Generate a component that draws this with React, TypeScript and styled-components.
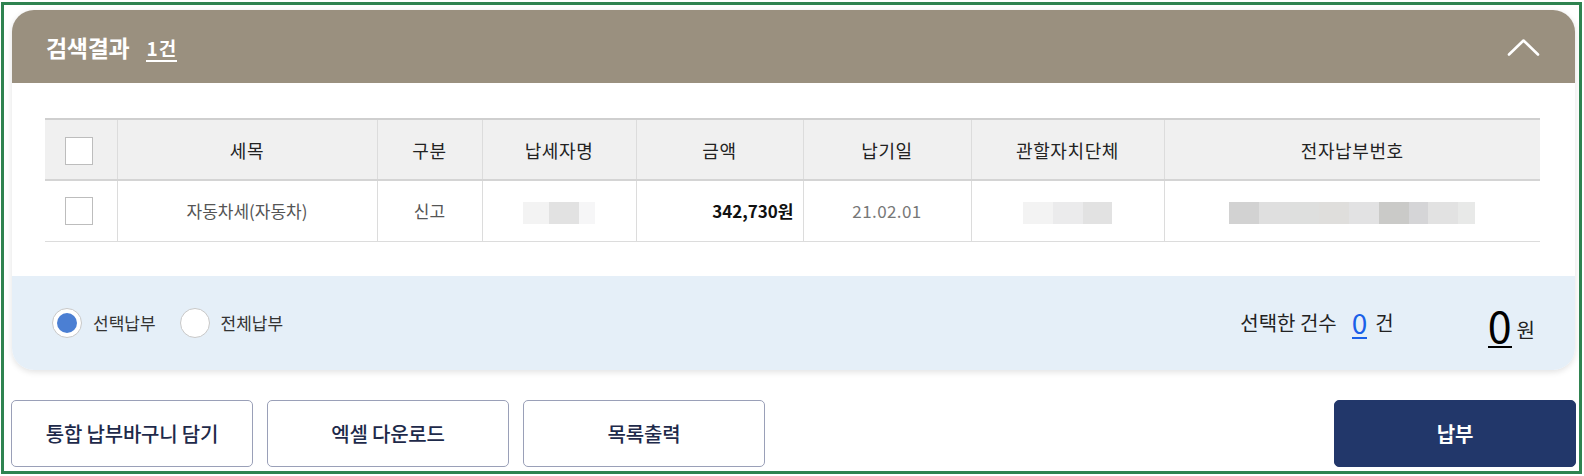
import React from 'react';
import styled, { createGlobalStyle } from 'styled-components';

const GlobalStyle = createGlobalStyle`
  html, body { margin: 0; padding: 0; background: #fff; }
  body { font-family: "Noto Sans CJK KR", "Noto Sans", sans-serif; }
  * { box-sizing: border-box; }
`;

const Frame = styled.div`
  margin: 2px 2px 2px 1px;
  height: 472px;
  border: 3px solid #2f8350;
  padding: 5px 4px 0 8px;
  display: flex;
  flex-direction: column;
`;

const Card = styled.section`
  border-radius: 22px;
  background: #fff;
  box-shadow: 0 2px 6px rgba(0, 0, 0, 0.12);
  overflow: hidden;
`;

const CardHeader = styled.header`
  height: 73px;
  background: #9a907f;
  display: flex;
  align-items: center;
  padding: 0 35px 0 34px;
`;

const Title = styled.h2`
  margin: 0;
  font-size: 23px;
  font-weight: 700;
  color: #fff;
  letter-spacing: -0.3px;
`;

const Count = styled.span`
  margin-left: 17px;
  font-size: 19px;
  font-weight: 700;
  color: #fff;
  border-bottom: 2px solid #fff;
  line-height: 24px;
  margin-top: 5px;
  letter-spacing: 1px;
`;

const Toggle = styled.button`
  margin-left: auto;
  background: none;
  border: 0;
  padding: 0;
  width: 33px;
  height: 20px;
  display: flex;
  align-items: center;
  justify-content: center;
`;

const CardBody = styled.div`
  padding: 35px 35px 34px 33px;
`;

const Table = styled.table`
  width: 100%;
  border-collapse: collapse;
  table-layout: fixed;
  border-top: 2px solid #cfcfcf;
`;

const Th = styled.th<{ $w?: number }>`
  width: ${p => (p.$w ? `${p.$w}px` : 'auto')};
  height: 61px;
  background: #f0f0f0;
  font-size: 18px;
  font-weight: 400;
  color: #222;
  text-align: center;
  letter-spacing: 0.6px;
  border-left: 1px solid #dcdcdc;
  border-bottom: 2px solid #d4d4d4;
  &:first-child { border-left: 0; padding-right: 4px; }
`;

const Td = styled.td<{ $align?: string; $bold?: boolean; $light?: boolean }>`
  height: 61px;
  font-size: 17px;
  color: ${p => (p.$bold ? '#111' : p.$light ? '#777' : '#555')};
  font-weight: ${p => (p.$bold ? 700 : 400)};
  text-align: ${p => p.$align || 'center'};
  padding: 0 ${p => (p.$align === 'right' ? '9px' : '0')} 0 0;
  border-left: 1px solid #dcdcdc;
  border-bottom: 1px solid #dcdcdc;
  letter-spacing: ${p => (p.$light ? '0.4px' : '0')};
  &:first-child { border-left: 0; padding-right: 4px; }
`;

const Check = styled.span`
  display: inline-block;
  width: 28px;
  height: 28px;
  border: 1px solid #bdbdbd;
  background: #fff;
  vertical-align: middle;
`;

const Blur = styled.div`
  display: inline-flex;
  height: 22px;
  vertical-align: middle;
`;

const BlurCell = styled.span<{ $c: string; $w: number }>`
  width: ${p => p.$w}px;
  height: 100%;
  background: ${p => p.$c};
`;

const Summary = styled.div`
  height: 94px;
  background: #e5eff8;
  display: flex;
  align-items: center;
  padding: 0 40px 0 40px;
`;

const RadioGroup = styled.div`
  display: flex;
  align-items: center;
  gap: 24px;
`;

const RadioItem = styled.label`
  display: flex;
  align-items: center;
  gap: 11px;
  font-size: 17px;
  color: #333;
`;

const RadioCircle = styled.span<{ $on?: boolean }>`
  width: 30px;
  height: 30px;
  border-radius: 50%;
  border: 1px solid #c8c8c8;
  background: #fff;
  display: flex;
  align-items: center;
  justify-content: center;
  &::after {
    content: '';
    width: 20px;
    height: 20px;
    border-radius: 50%;
    background: ${p => (p.$on ? '#4b7fd3' : 'transparent')};
  }
`;

const Totals = styled.div`
  margin-left: auto;
  display: flex;
  align-items: center;
`;

const TotalLabel = styled.span`
  font-size: 20px;
  color: #222;
`;

const CountNum = styled.span`
  margin: 0 8px 0 15px;
  font-size: 28px;
  line-height: 30px;
  color: #1a60e8;
  border-bottom: 2px solid #1a60e8;
`;

const Amount = styled.span`
  margin-left: 94px;
  font-size: 43px;
  line-height: 44px;
  color: #000;
  border-bottom: 2px solid #000;
  margin-top: 4px;
`;

const Unit = styled.span`
  margin-left: 5px;
  font-size: 20px;
  color: #222;
  margin-top: 14px;
`;

const Actions = styled.div`
  margin-top: 30px;
  margin-left: -1px;
  display: flex;
  gap: 14px;
`;

const ActionButton = styled.button<{ $primary?: boolean }>`
  width: 242px;
  height: 67px;
  border-radius: 5px;
  border: 1px solid ${p => (p.$primary ? '#22376a' : '#9aa0b8')};
  background: ${p => (p.$primary ? '#22376a' : '#fff')};
  color: ${p => (p.$primary ? '#fff' : '#1e2a4a')};
  font-family: "Noto Sans CJK KR", sans-serif;
  font-size: 20px;
  font-weight: ${p => (p.$primary ? 700 : 500)};
  letter-spacing: -0.2px;
  margin-left: ${p => (p.$primary ? 'auto' : '0')};
  margin-right: ${p => (p.$primary ? '-1px' : '0')};
`;

const nameBlur = [
  { c: '#f3f3f3', w: 26 },
  { c: '#e2e2e2', w: 30 },
  { c: '#f6f6f7', w: 16 },
];
const orgBlur = [
  { c: '#f3f3f3', w: 30 },
  { c: '#ebebec', w: 30 },
  { c: '#e2e2e2', w: 29 },
];
const numBlur = [
  { c: '#d2d2d2', w: 30 },
  { c: '#dfdfdf', w: 31 },
  { c: '#dedfde', w: 29 },
  { c: '#dfdedc', w: 30 },
  { c: '#e2e2e3', w: 30 },
  { c: '#cacac8', w: 30 },
  { c: '#d5d5d7', w: 19 },
  { c: '#e2e2e2', w: 30 },
  { c: '#e8e9e8', w: 17 },
];

const BlurBox: React.FC<{ cells: { c: string; w: number }[] }> = ({ cells }) => (
  <Blur>
    {cells.map((b, i) => (
      <BlurCell key={i} $c={b.c} $w={b.w} />
    ))}
  </Blur>
);

export default function App() {
  return (
    <>
      <GlobalStyle />
      <Frame>
        <Card>
          <CardHeader>
            <Title>검색결과</Title>
            <Count>1건</Count>
            <Toggle aria-label="접기">
              <svg width="33" height="18" viewBox="0 0 33 18" fill="none">
                <path d="M2 16.5 L16.5 2.5 L31 16.5" stroke="#fff" strokeWidth="2.6" strokeLinecap="round" strokeLinejoin="round" />
              </svg>
            </Toggle>
          </CardHeader>
          <CardBody>
            <Table>
              <thead>
                <tr>
                  <Th $w={72}><Check /></Th>
                  <Th $w={260}>세목</Th>
                  <Th $w={105}>구분</Th>
                  <Th $w={154}>납세자명</Th>
                  <Th $w={167}>금액</Th>
                  <Th $w={168}>납기일</Th>
                  <Th $w={193}>관할자치단체</Th>
                  <Th>전자납부번호</Th>
                </tr>
              </thead>
              <tbody>
                <tr>
                  <Td><Check /></Td>
                  <Td>자동차세(자동차)</Td>
                  <Td>신고</Td>
                  <Td><BlurBox cells={nameBlur} /></Td>
                  <Td $align="right" $bold>342,730원</Td>
                  <Td $light>21.02.01</Td>
                  <Td><BlurBox cells={orgBlur} /></Td>
                  <Td><BlurBox cells={numBlur} /></Td>
                </tr>
              </tbody>
            </Table>
          </CardBody>
          <Summary>
            <RadioGroup>
              <RadioItem><RadioCircle $on />선택납부</RadioItem>
              <RadioItem><RadioCircle />전체납부</RadioItem>
            </RadioGroup>
            <Totals>
              <TotalLabel>선택한 건수</TotalLabel>
              <CountNum>0</CountNum>
              <TotalLabel>건</TotalLabel>
              <Amount>0</Amount>
              <Unit>원</Unit>
            </Totals>
          </Summary>
        </Card>
        <Actions>
          <ActionButton>통합 납부바구니 담기</ActionButton>
          <ActionButton>엑셀 다운로드</ActionButton>
          <ActionButton>목록출력</ActionButton>
          <ActionButton $primary>납부</ActionButton>
        </Actions>
      </Frame>
    </>
  );
}
